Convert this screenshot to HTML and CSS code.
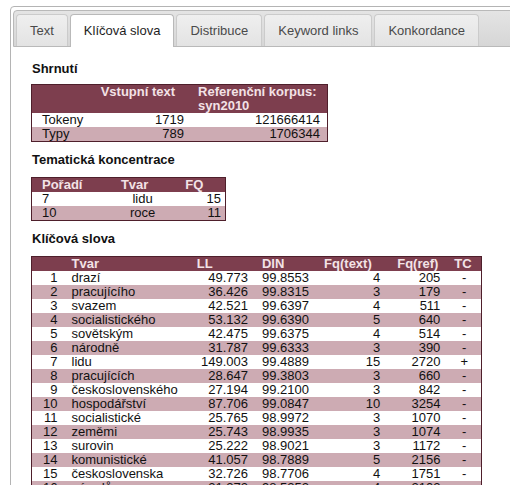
FILE: index.html
```html
<!DOCTYPE html>
<html lang="cs">
<head>
<meta charset="utf-8">
<title>Klíčová slova</title>
<link rel="stylesheet" href="styles.css">
</head>
<body>
<div class="tabs">
  <ul class="nav">
    <li class="tab">Text</li>
    <li class="tab active">Klíčová slova</li>
    <li class="tab">Distribuce</li>
    <li class="tab">Keyword links</li>
    <li class="tab">Konkordance</li>
  </ul>
  <div class="panel">
    <h3 class="heading first">Shrnutí</h3>
    <table class="data summary">
      <colgroup><col class="c1"><col class="c2"><col class="c3"></colgroup>
      <thead>
        <tr><th></th><th>Vstupní text</th><th>Referenční korpus: syn2010</th></tr>
      </thead>
      <tbody>
        <tr><td class="lbl">Tokeny</td><td class="num">1719</td><td class="num">121666414</td></tr>
        <tr><td class="lbl">Typy</td><td class="num">789</td><td class="num">1706344</td></tr>
      </tbody>
    </table>

    <h3 class="heading">Tematická koncentrace</h3>
    <table class="data thematic">
      <colgroup><col class="c1"><col class="c2"><col class="c3"></colgroup>
      <thead>
        <tr><th class="lbl">Pořadí</th><th>Tvar</th><th>FQ</th></tr>
      </thead>
      <tbody>
        <tr><td class="lbl">7</td><td class="ctr">lidu</td><td class="num">15</td></tr>
        <tr><td class="lbl">10</td><td class="ctr">roce</td><td class="num">11</td></tr>
      </tbody>
    </table>

    <h3 class="heading">Klíčová slova</h3>
    <table class="data keywords">
      <colgroup><col class="k1"><col class="k2"><col class="k3"><col class="k4"><col class="k5"><col class="k6"><col class="k7"></colgroup>
      <thead>
        <tr><th></th><th>Tvar</th><th>LL</th><th>DIN</th><th>Fq(text)</th><th>Fq(ref)</th><th>TC</th></tr>
      </thead>
      <tbody>
        <tr><td class="num">1</td><td>drazí</td><td class="num">49.773</td><td>99.8553</td><td class="num">4</td><td class="num">205</td><td class="ctr">-</td></tr>
        <tr><td class="num">2</td><td>pracujícího</td><td class="num">36.426</td><td>99.8315</td><td class="num">3</td><td class="num">179</td><td class="ctr">-</td></tr>
        <tr><td class="num">3</td><td>svazem</td><td class="num">42.521</td><td>99.6397</td><td class="num">4</td><td class="num">511</td><td class="ctr">-</td></tr>
        <tr><td class="num">4</td><td>socialistického</td><td class="num">53.132</td><td>99.6390</td><td class="num">5</td><td class="num">640</td><td class="ctr">-</td></tr>
        <tr><td class="num">5</td><td>sovětským</td><td class="num">42.475</td><td>99.6375</td><td class="num">4</td><td class="num">514</td><td class="ctr">-</td></tr>
        <tr><td class="num">6</td><td>národně</td><td class="num">31.787</td><td>99.6333</td><td class="num">3</td><td class="num">390</td><td class="ctr">-</td></tr>
        <tr><td class="num">7</td><td>lidu</td><td class="num">149.003</td><td>99.4889</td><td class="num">15</td><td class="num">2720</td><td class="ctr">+</td></tr>
        <tr><td class="num">8</td><td>pracujících</td><td class="num">28.647</td><td>99.3803</td><td class="num">3</td><td class="num">660</td><td class="ctr">-</td></tr>
        <tr><td class="num">9</td><td>československého</td><td class="num">27.194</td><td>99.2100</td><td class="num">3</td><td class="num">842</td><td class="ctr">-</td></tr>
        <tr><td class="num">10</td><td>hospodářství</td><td class="num">87.706</td><td>99.0847</td><td class="num">10</td><td class="num">3254</td><td class="ctr">-</td></tr>
        <tr><td class="num">11</td><td>socialistické</td><td class="num">25.765</td><td>98.9972</td><td class="num">3</td><td class="num">1070</td><td class="ctr">-</td></tr>
        <tr><td class="num">12</td><td>zeměmi</td><td class="num">25.743</td><td>98.9935</td><td class="num">3</td><td class="num">1074</td><td class="ctr">-</td></tr>
        <tr><td class="num">13</td><td>surovin</td><td class="num">25.222</td><td>98.9021</td><td class="num">3</td><td class="num">1172</td><td class="ctr">-</td></tr>
        <tr><td class="num">14</td><td>komunistické</td><td class="num">41.057</td><td>98.7889</td><td class="num">5</td><td class="num">2156</td><td class="ctr">-</td></tr>
        <tr><td class="num">15</td><td>československa</td><td class="num">32.726</td><td>98.7706</td><td class="num">4</td><td class="num">1751</td><td class="ctr">-</td></tr>
        <tr><td class="num">16</td><td>národů</td><td class="num">31.272</td><td>98.5252</td><td class="num">4</td><td class="num">2102</td><td class="ctr">-</td></tr>
      </tbody>
    </table>
  </div>
</div>
</body>
</html>
```

FILE: styles.css
```css
html, body {
  margin: 0;
  padding: 0;
  overflow: hidden;
  background: #fff;
}

body {
  font-family: "Liberation Sans", Arial, Helvetica, sans-serif;
  color: #111;
}

.tabs {
  margin: 6px 0 0 10px;
  width: 560px;
  border: 1px solid #b4b4b4;
  border-radius: 4px;
  padding: 3px 2px 0 2px;
  background: #fff;
}

.nav {
  list-style: none;
  margin: 0;
  padding: 3px 2px 0 2px;
  display: flex;
  align-items: flex-end;
  gap: 2px;
  border: 1px solid #b9b9b9;
  border-radius: 4px 4px 0 0;
  background: linear-gradient(#e4e4e4, #d6d6d6);
}

.tab {
  font-size: 13px;
  line-height: 31px;
  padding: 0 13px;
  color: #4a4a4a;
  border: 1px solid #cbcbcb;
  border-bottom: none;
  border-radius: 4px 4px 0 0;
  background: linear-gradient(#efefef, #e3e3e3);
}

.tab.active {
  background: #fff;
  color: #1e1e1e;
  border-color: #b9b9b9;
  padding-bottom: 1px;
  margin-bottom: -1px;
}

.panel {
  padding: 14px 18px 0 18px;
}

.heading {
  font-size: 13px;
  font-weight: bold;
  line-height: 16px;
  margin: 10px 0 9px 1px;
  color: #111;
}

.heading.first {
  margin-top: 0;
  margin-bottom: 7px;
}

.data {
  border-collapse: collapse;
  table-layout: fixed;
  border: 1px solid #4e1f2b;
  font-size: 13px;
  line-height: 14px;
}

.data th,
.data td {
  padding: 0 7px;
  white-space: nowrap;
  text-align: left;
}

.data th {
  background: #7d3e4e;
  color: #f3e2e6;
  font-weight: bold;
  vertical-align: top;
}

.summary th {
  white-space: normal;
  padding-right: 2px;
}

.data tbody tr:nth-child(odd) td {
  background: #fff;
}

.data tbody tr:nth-child(even) td {
  background: #cdabb3;
}

.data td.num {
  text-align: right;
}

.data td.ctr {
  text-align: center;
}

.data .lbl {
  padding-left: 10px;
}

.summary { width: 297px; }
.summary .c1 { width: 62px; }
.summary .c2 { width: 97px; }
.summary .c3 { width: 136px; }

.thematic { width: 195px; }
.thematic .c1 { width: 82px; }
.thematic .c2 { width: 64px; }
.thematic .c3 { width: 47px; }
.thematic td.ctr { padding-right: 14px; }
.thematic td.num { padding-right: 4px; }

.keywords { width: 451px; }
.keywords .k1 { width: 33px; }
.keywords .k2 { width: 125px; }
.keywords .k3 { width: 65px; }
.keywords .k4 { width: 62px; }
.keywords .k5 { width: 70px; }
.keywords .k6 { width: 60px; }
.keywords .k7 { width: 34px; }
.keywords th:nth-child(6) { padding-left: 10px; }
```
